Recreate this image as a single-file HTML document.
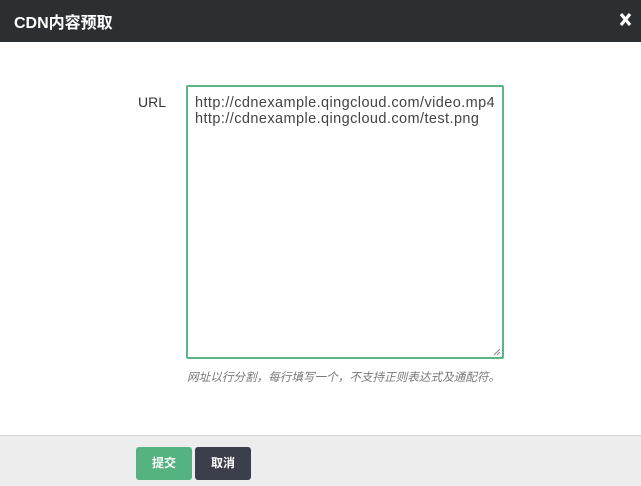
<!DOCTYPE html>
<html><head><meta charset="utf-8"><style>
body{margin:0;width:641px;height:485px;overflow:hidden;background:#fff;font-family:"Liberation Sans","Noto Sans CJK SC",sans-serif;position:relative}
.hd{position:absolute;left:0;top:0;width:641px;height:42px;background:#2b2f31;color:#fff}
.hd .t{position:absolute;left:14px;top:9px;font-size:16px;font-weight:bold}
.lbl{position:absolute;left:138px;top:94px;font-size:14px;color:#333}
.ta{position:absolute;left:186px;top:85px;width:314px;height:270px;border:2px solid #5bb585;border-radius:2px;font-size:14.5px;color:#444;line-height:16px;letter-spacing:0.42px}
.ta div{position:absolute;left:7px;top:8px}
.hint{position:absolute;left:187px;top:369px;font-size:11.6px;color:#777;font-style:italic}
.ft{position:absolute;left:0;top:435px;width:641px;height:50px;background:#ededed;border-top:1px solid #d4d4dc}
.b{position:absolute;top:11px;width:56px;height:33px;border-radius:3px;color:#fff;font-size:12px;font-weight:bold;text-align:center;line-height:33px}
</style></head><body>
<div class="hd"><div class="t">CDN内容预取</div>
<svg style="position:absolute;left:619px;top:12px" width="13" height="15"><path d="M2 2L11 13M11 2L2 13" stroke="#fff" stroke-width="3.2"/></svg></div>
<div class="lbl">URL</div>
<div class="ta"><div>http://cdnexample.qingcloud.com/video.mp4<br>http://cdnexample.qingcloud.com/test.png</div>
<svg style="position:absolute;right:1px;bottom:1px" width="8" height="8"><path d="M1 7L7 1M4 7L7 4" stroke="#888" stroke-width="1"/></svg></div>
<div class="hint">网址以行分割，每行填写一个，不支持正则表达式及通配符。</div>
<div class="ft"><div class="b" style="left:136px;background:#55b381">提交</div><div class="b" style="left:195px;background:#3b3f4c">取消</div></div>
</body></html>
